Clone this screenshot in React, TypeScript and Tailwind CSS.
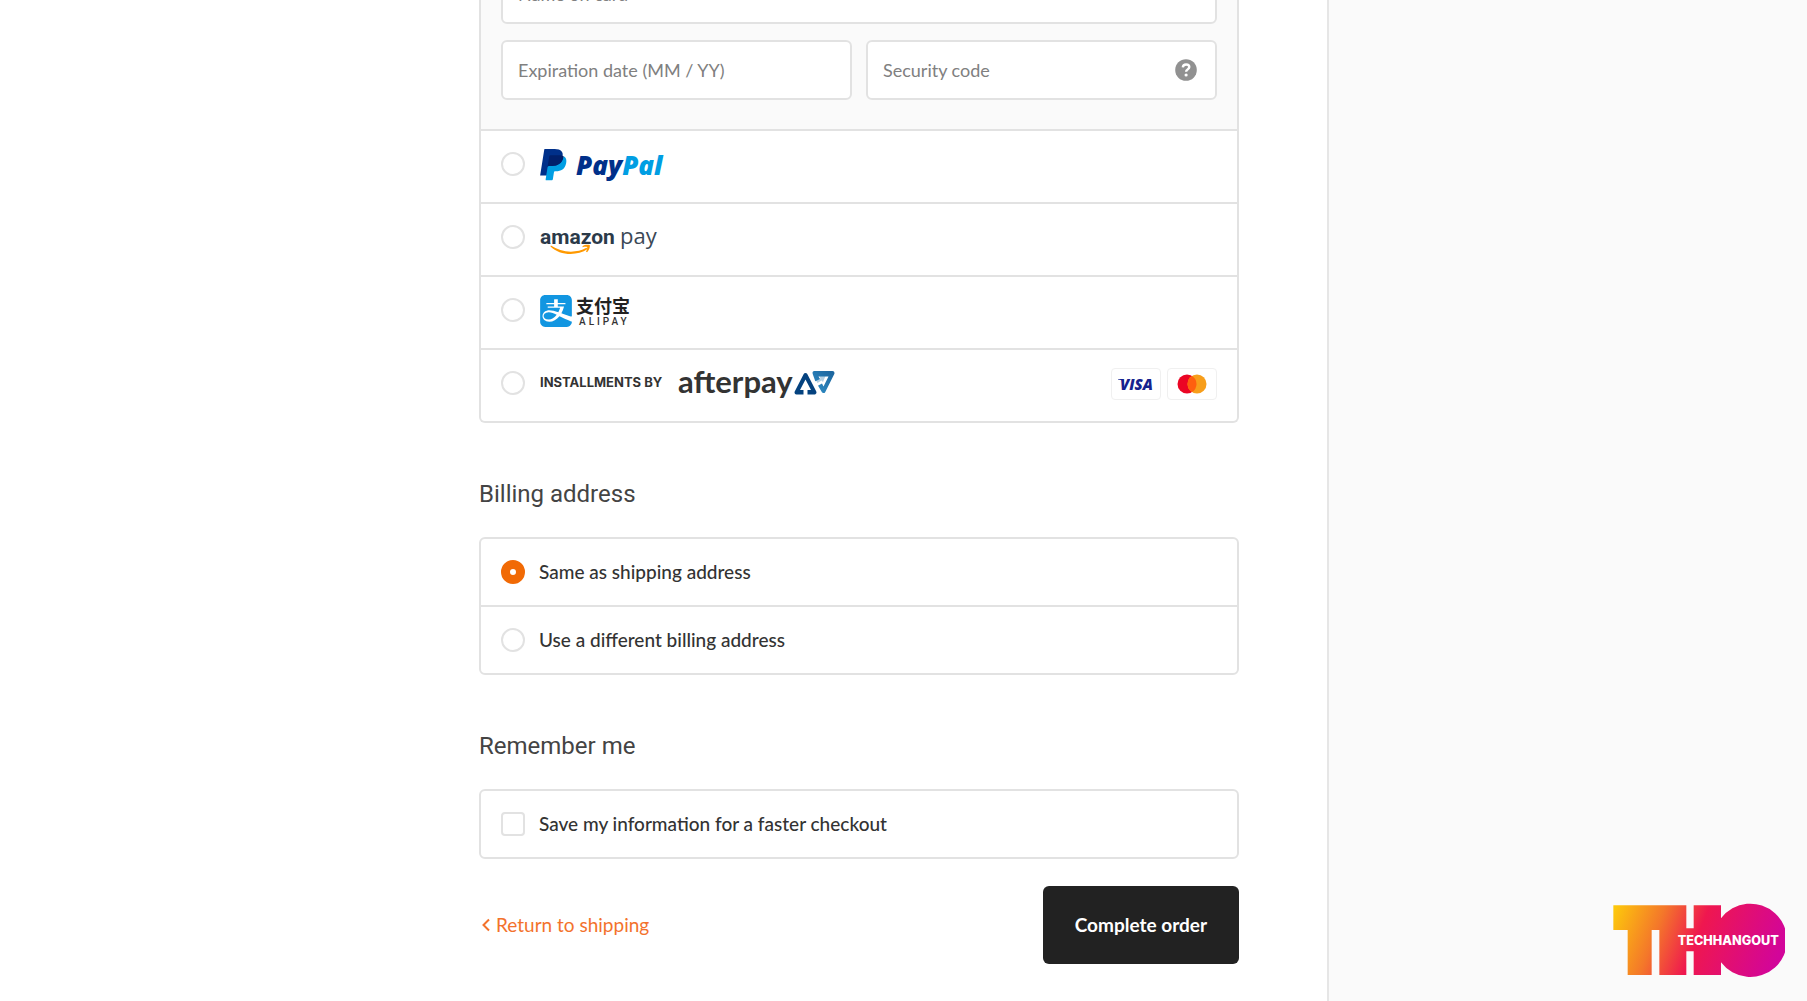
import { useState } from 'react';
import type { ReactNode } from 'react';
import { SiAlipay } from 'react-icons/si';

const PayPalLogo = () => (
  <svg width="134" height="38" viewBox="0 0 134 38" role="img" aria-label="PayPal">
    <g transform="translate(0 3) scale(1.07)">
      <path
        fill="#00308a"
        d="M7.266 29.154l.523-3.322-1.165-.027H1.061L4.927 1.292a.316.316 0 0 1 .314-.268h9.38c3.114 0 5.263.648 6.385 1.927.526.6.861 1.227 1.023 1.917.17.724.173 1.589.007 2.644l-.012.077v.676l.526.298a3.69 3.69 0 0 1 1.065.812c.45.513.741 1.165.864 1.938.127.795.085 1.741-.123 2.812-.24 1.232-.628 2.305-1.152 3.183a6.547 6.547 0 0 1-1.825 2c-.696.494-1.523.869-2.458 1.109-.906.236-1.939.355-3.072.355h-.73c-.522 0-1.029.188-1.427.525a2.21 2.21 0 0 0-.744 1.328l-.055.299-.924 5.855-.042.215c-.011.068-.03.102-.058.125a.155.155 0 0 1-.096.035H7.266z"
      />
      <path
        fill="#009ee3"
        d="M23.048 7.667c-.028.179-.06.362-.096.55-1.237 6.351-5.469 8.545-10.874 8.545H9.326c-.661 0-1.218.48-1.321 1.132L6.596 26.83l-.399 2.533a.704.704 0 0 0 .695.814h4.881c.578 0 1.069-.42 1.16-.99l.048-.248.919-5.832.059-.32c.09-.572.582-.992 1.16-.992h.73c4.729 0 8.431-1.92 9.513-7.476.452-2.321.218-4.259-.978-5.622a4.667 4.667 0 0 0-1.336-1.03z"
      />
      <path
        fill="#01206b"
        d="M21.754 7.151a9.757 9.757 0 0 0-1.203-.267 15.284 15.284 0 0 0-2.426-.177h-7.352a1.172 1.172 0 0 0-1.159.992L8.05 17.605l-.045.289a1.336 1.336 0 0 1 1.321-1.132h2.752c5.405 0 9.637-2.195 10.874-8.545.037-.188.068-.371.096-.55a6.594 6.594 0 0 0-1.017-.429 9.045 9.045 0 0 0-.277-.087z"
      />
    </g>
    <text x="37" y="30" fontFamily="'Open Sans', sans-serif" fontSize="26" fontWeight="800" fontStyle="italic" fill="#00308a">
      Pay<tspan fill="#009ee3">Pal</tspan>
    </text>
  </svg>
);

const AmazonPayLogo = () => (
  <svg width="124" height="38" viewBox="0 0 124 38" role="img" aria-label="Amazon Pay">
    <text x="1" y="26" fontFamily="Roboto, sans-serif" fontSize="21" fontWeight="700" fill="#2b3a49">
      amazon
    </text>
    <text x="81" y="26" fontFamily="'Open Sans', sans-serif" fontSize="22" fill="#3b4856">
      pay
    </text>
    <path d="M11.900 27.600c10 7 25 8.200 35.500 2.200l1.200 1.200C38 38.300 20.500 37.500 11.500 28.400z" fill="#ff9900" />
    <path d="M43.500 28.200c2.200-1.600 5.200-1.900 7.300-1.100.4 2.200-.7 5.200-2.700 7.100l-1.100-.4c.9-1.800 1.400-3.500 1.200-4.700-1.200-.5-2.900-.3-4.600.1z" fill="#ff9900" />
  </svg>
);

const AlipayLogo = () => (
  <span className="flex items-center gap-1 pt-0.5 pl-px">
    <SiAlipay className="h-8 w-8 text-[#1296e1]" aria-hidden="true" />
    <svg width="60" height="44" viewBox="0 0 60 44" role="img" aria-label="Alipay">
      <text x="0" y="24" fontFamily="'Noto Sans CJK SC', sans-serif" fontSize="18" fontWeight="700" fill="#222">
        支付宝
      </text>
      <text x="3" y="36" fontFamily="Roboto, sans-serif" fontSize="10" fontWeight="500" letterSpacing="3" fill="#333">
        ALIPAY
      </text>
    </svg>
  </span>
);

const AfterpayLogo = () => (
  <span className="flex items-center gap-4 pl-px">
    <span className="font-[Inter,sans-serif] text-[13px] font-bold text-[#333]">INSTALLMENTS BY</span>
    <svg width="160" height="44" viewBox="0 0 160 44" role="img" aria-label="Afterpay">
      <defs>
        <linearGradient id="afterpay-mark" x1="0" y1="1" x2="1" y2="0">
          <stop offset="0" stopColor="#2f8cc4" />
          <stop offset="1" stopColor="#1c669f" />
        </linearGradient>
      </defs>
      <text x="0" y="32" fontFamily="Lato, sans-serif" fontSize="31" fontWeight="700" fill="#333">
        afterpay
      </text>
      {/* upper-right triangle */}
      <path
        d="M136.500 12H154.500L145.500 30L139 19z"
        fill="url(#afterpay-mark)"
        stroke="url(#afterpay-mark)"
        strokeWidth="4"
        strokeLinejoin="round"
      />
      <path d="M140.500 15.500H150.500L145.500 25.500L144 22.500L138.500 25.500L136 21L142 18z" fill="#fff" />
      <path d="M141.500 15L147.500 15L145 21L143.500 19.500L139.500 22L138 19.500L142.500 17.500z" fill="#2878b0" opacity="0.35" />
      {/* lower-left triangle */}
      <path d="M127.500 14L136.500 31.500H118.500z" fill="#04427f" stroke="#04427f" strokeWidth="4" strokeLinejoin="round" />
      <path d="M127.500 18.500L133 29H129.500V34H125.500V29H122z" fill="#fff" />
    </svg>
  </span>
);

const CardBrands = () => (
  <span className="ml-auto flex gap-1.5 pt-0.5">
    <span className="flex h-8 w-[50px] items-center justify-center rounded border border-[#f0f0f0] bg-white">
      <svg width="40" height="24" viewBox="0 0 40 24" role="img" aria-label="Visa">
        <text x="4" y="18" fontFamily="'Open Sans', sans-serif" fontSize="15" fontWeight="800" fontStyle="italic" fill="#16228f">
          VISA
        </text>
        <path d="M2 7h5l1 2.500C6 8 4 7.500 2 7.400z" fill="#16228f" />
      </svg>
    </span>
    <span className="flex h-8 w-[50px] items-center justify-center rounded border border-[#f0f0f0] bg-white">
      <svg width="30" height="20" viewBox="0 0 30 20" role="img" aria-label="Mastercard">
        <circle cx="10" cy="10" r="9.500" fill="#eb0524" />
        <circle cx="20" cy="10" r="9.500" fill="#f79e1b" />
        <path d="M15 1.900a9.500 9.500 0 0 1 0 16.200a9.500 9.500 0 0 1 0-16.200z" fill="#ff5f0f" />
      </svg>
    </span>
  </span>
);

const TechHangoutLogo = () => (
  <svg width="172" height="75" viewBox="0 0 516 225" role="img" aria-label="TechHangout">
    <defs>
      <linearGradient id="tho" gradientUnits="userSpaceOnUse" x1="0" y1="20" x2="480" y2="200">
        <stop offset="0" stopColor="#fdc90b" />
        <stop offset="0.28" stopColor="#f4772a" />
        <stop offset="0.52" stopColor="#ef174f" />
        <stop offset="1" stopColor="#d2059a" />
      </linearGradient>
    </defs>
    <path
      fill="url(#tho)"
      d="M1 7H220V76H242V7H324V46A110 110 0 1 1 324 178V216H242V145H220V216H139V81H116V216H44V81H1z"
    />
    <text x="194" y="126" fontFamily="Inter, sans-serif" fontSize="38" fontWeight="800" fill="#fff">
      TECHHANGOUT
    </text>
  </svg>
);

const HelpIcon = () => (
  <svg width="22" height="22" viewBox="0 0 22 22" aria-hidden="true">
    <circle cx="11" cy="11" r="10.800" fill="#919191" />
    <path
      d="M7.800 8.300C8 6.400 9.300 5.500 11.100 5.500c1.900 0 3.200 1 3.200 2.600 0 2.300-3.200 2.300-3.200 4.700"
      fill="none"
      stroke="#fff"
      strokeWidth="2.400"
    />
    <circle cx="11.100" cy="16" r="1.600" fill="#fff" />
  </svg>
);

const radioClass =
  'h-6 w-6 shrink-0 cursor-pointer appearance-none rounded-full border-2 border-[#e2e2e2] bg-white checked:border-[9px] checked:border-[#f16a05]';

const fieldClass =
  'h-[60px] w-full min-w-0 rounded-md border-2 border-[#e2e2e2] bg-white px-[15px] text-lg text-[#333] outline-none placeholder:text-[#808080]';

const headingClass = 'mt-14 mb-7 font-[Roboto,sans-serif] text-2xl leading-[30px] text-[#444]';

const methods: { id: string; logo: ReactNode }[] = [
  { id: 'paypal', logo: <PayPalLogo /> },
  { id: 'amazon', logo: <AmazonPayLogo /> },
  { id: 'alipay', logo: <AlipayLogo /> },
  { id: 'afterpay', logo: <AfterpayLogo /> },
];

const billingOptions = [
  { id: 'same', label: 'Same as shipping address' },
  { id: 'different', label: 'Use a different billing address' },
];

const App = () => {
  const [method, setMethod] = useState('card');
  const [billing, setBilling] = useState('same');
  const [remember, setRemember] = useState(false);

  return (
    <div className="flex h-screen overflow-hidden bg-white font-[Lato,sans-serif] text-[19px] text-[#333]">
      <main className="flex-1 pr-[88px] pl-8">
        <form className="ml-auto w-full max-w-[760px]" onSubmit={(e) => e.preventDefault()}>
          {/* Payment methods */}
          <section className="rounded-b-md border-2 border-t-0 border-[#e2e2e2]">
            <div className="-mt-9 bg-[#fafafa] px-5 pb-[29px]">
              <input className={fieldClass} placeholder="Name on card" aria-label="Name on card" />
              <div className="mt-4 grid grid-cols-2 gap-3.5">
                <input className={fieldClass} placeholder="Expiration date (MM / YY)" aria-label="Expiration date (MM / YY)" />
                <div className="relative">
                  <input className={fieldClass} placeholder="Security code" aria-label="Security code" />
                  <button type="button" aria-label="Security code help" className="absolute top-[19px] right-5">
                    <HelpIcon />
                  </button>
                </div>
              </div>
            </div>
            {methods.map((item) => (
              <label
                key={item.id}
                className="flex h-[73px] cursor-pointer items-center gap-3.5 border-t-2 border-[#e2e2e2] px-5 pb-1.5"
              >
                <input
                  type="radio"
                  name="method"
                  className={radioClass}
                  checked={method === item.id}
                  onChange={() => setMethod(item.id)}
                />
                {item.logo}
                {item.id === 'afterpay' && <CardBrands />}
              </label>
            ))}
          </section>

          {/* Billing address */}
          <h2 className={headingClass}>Billing address</h2>
          <section className="divide-y-2 divide-[#e2e2e2] rounded-md border-2 border-[#e2e2e2]">
            {billingOptions.map((option) => (
              <label key={option.id} className="flex cursor-pointer items-center gap-3.5 px-5 py-[21px] leading-6 font-medium">
                <input
                  type="radio"
                  name="billing"
                  className={radioClass}
                  checked={billing === option.id}
                  onChange={() => setBilling(option.id)}
                />
                {option.label}
              </label>
            ))}
          </section>

          {/* Remember me */}
          <h2 className={headingClass}>Remember me</h2>
          <section className="rounded-md border-2 border-[#e2e2e2]">
            <label className="flex cursor-pointer items-center gap-3.5 px-5 py-[21px] leading-6 font-medium">
              <input
                type="checkbox"
                className="h-6 w-6 shrink-0 cursor-pointer appearance-none rounded border-2 border-[#e2e2e2] bg-white checked:border-[9px] checked:border-[#f16a05]"
                checked={remember}
                onChange={(e) => setRemember(e.target.checked)}
              />
              Save my information for a faster checkout
            </label>
          </section>

          <div className="mt-[27px] flex items-center justify-between">
            <a href="#shipping" className="flex items-center gap-1.5 pl-[3px] text-[#f3722c]">
              <svg width="8" height="14" viewBox="0 0 8 14" aria-hidden="true">
                <path d="M7 1.500 1.500 7 7 12.500" fill="none" stroke="currentColor" strokeWidth="2" />
              </svg>
              Return to shipping
            </a>
            <button type="submit" className="h-[78px] rounded-md bg-[#222] px-8 font-bold text-white">
              Complete order
            </button>
          </div>
        </form>
      </main>

      <aside className="flex w-[480px] flex-col items-end justify-end border-l-2 border-[#e6e6e6] bg-[#fafafa] pr-[22px] pb-[23px]">
        <TechHangoutLogo />
      </aside>
    </div>
  );
};

export default App;
